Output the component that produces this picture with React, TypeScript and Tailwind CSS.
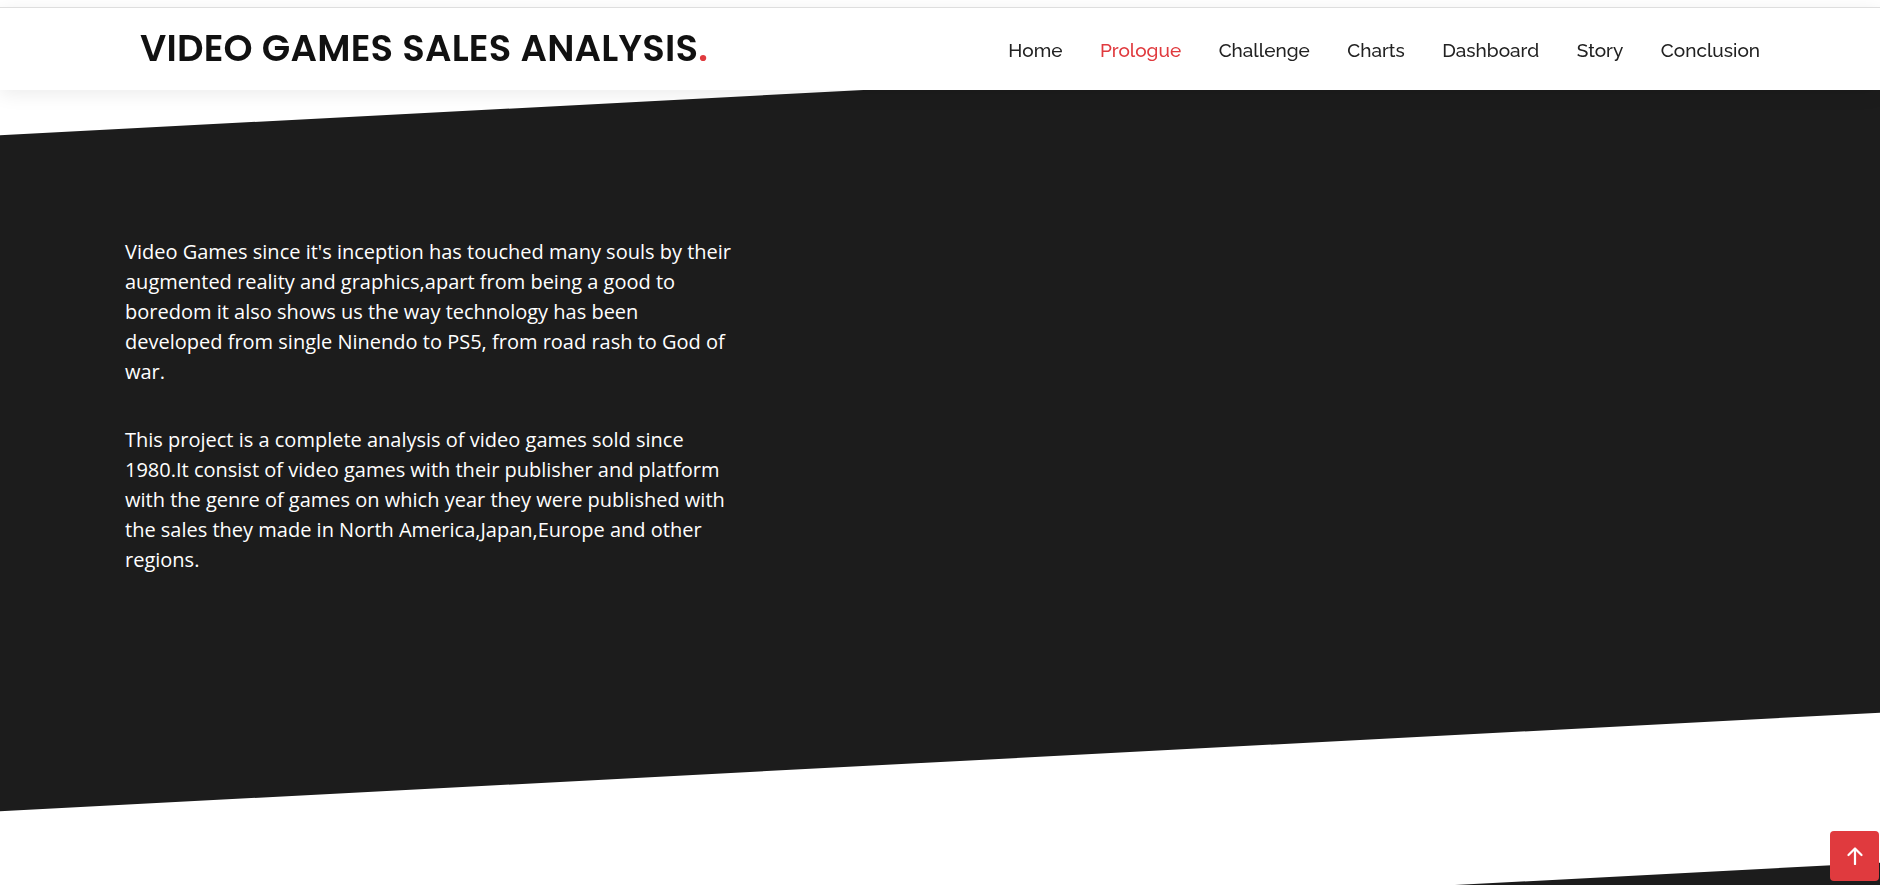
import { ReactNode } from "react";

const NAV_LINKS = ["Home", "Prologue", "Challenge", "Charts", "Dashboard", "Story", "Conclusion"];
const ACTIVE_LINK = "Prologue";

function Header() {
  return (
    <header className="fixed inset-x-0 top-0 z-20">
      <div className="h-[7px] bg-white" />
      <div className="border-t border-[#dedede] bg-white shadow-[0_4px_18px_rgba(0,0,0,0.08)]">
        <div className="flex h-[82px] items-center justify-between pl-[140px] pr-[120px]">
          <h1 className="font-['Poppins','Inter',sans-serif] text-[37px] font-semibold tracking-[0.2px] text-[#111111]">
            VIDEO GAMES SALES ANALYSIS<span className="text-[#e03a3e]">.</span>
          </h1>
          <nav className="flex items-center gap-[37.5px] pt-[3px] font-['Raleway','Lato',sans-serif] text-[19px] font-medium">
            {NAV_LINKS.map((link) => (
              <a
                key={link}
                href="#"
                className={link === ACTIVE_LINK ? "text-[#e03a3e]" : "text-[#222222]"}
              >
                {link}
              </a>
            ))}
          </nav>
        </div>
      </div>
    </header>
  );
}

function SkewSection({ className, children }: { className: string; children?: ReactNode }) {
  return (
    <section className={`-skew-y-3 bg-[#1c1c1c] ${className}`}>
      <div className="skew-y-3">{children}</div>
    </section>
  );
}

function BackToTop() {
  return (
    <a
      href="#"
      className="fixed bottom-[4px] right-[1px] z-30 flex h-[50px] w-[49px] items-center justify-center rounded-[4px] bg-[#e03a3e]"
    >
      <svg width="16" height="18" viewBox="0 0 16 18" fill="none" stroke="white" strokeWidth="2.2" strokeLinecap="round">
        <polyline points="1.5,8 8,1.5 14.5,8" strokeLinejoin="round" />
        <line x1="8" y1="2" x2="8" y2="17" />
      </svg>
    </a>
  );
}

export default function App() {
  return (
    <div className="min-h-screen overflow-hidden bg-white font-['Open_Sans',sans-serif]">
      <Header />
      <main className="pt-[86px]">
        <SkewSection className="h-[676px]">
          <div className="pl-[125px] pt-[151px]">
            <div className="w-[610px] text-[20px] leading-[30px] text-white">
              <p className="mb-[38px]">
                Video Games since it's inception has touched many souls by their augmented reality and
                graphics,apart from being a good to boredom it also shows us the way technology has been
                developed from single Ninendo to PS5, from road rash to God of war.
              </p>
              <p>
                This project is a complete analysis of video games sold since 1980.It consist of video games
                with their publisher and platform with the genre of games on which year they were published
                with the sales they made in North America,Japan,Europe and other regions.
              </p>
            </div>
          </div>
        </SkewSection>
        <SkewSection className="mt-[150px] h-[600px]" />
      </main>
      <BackToTop />
    </div>
  );
}
